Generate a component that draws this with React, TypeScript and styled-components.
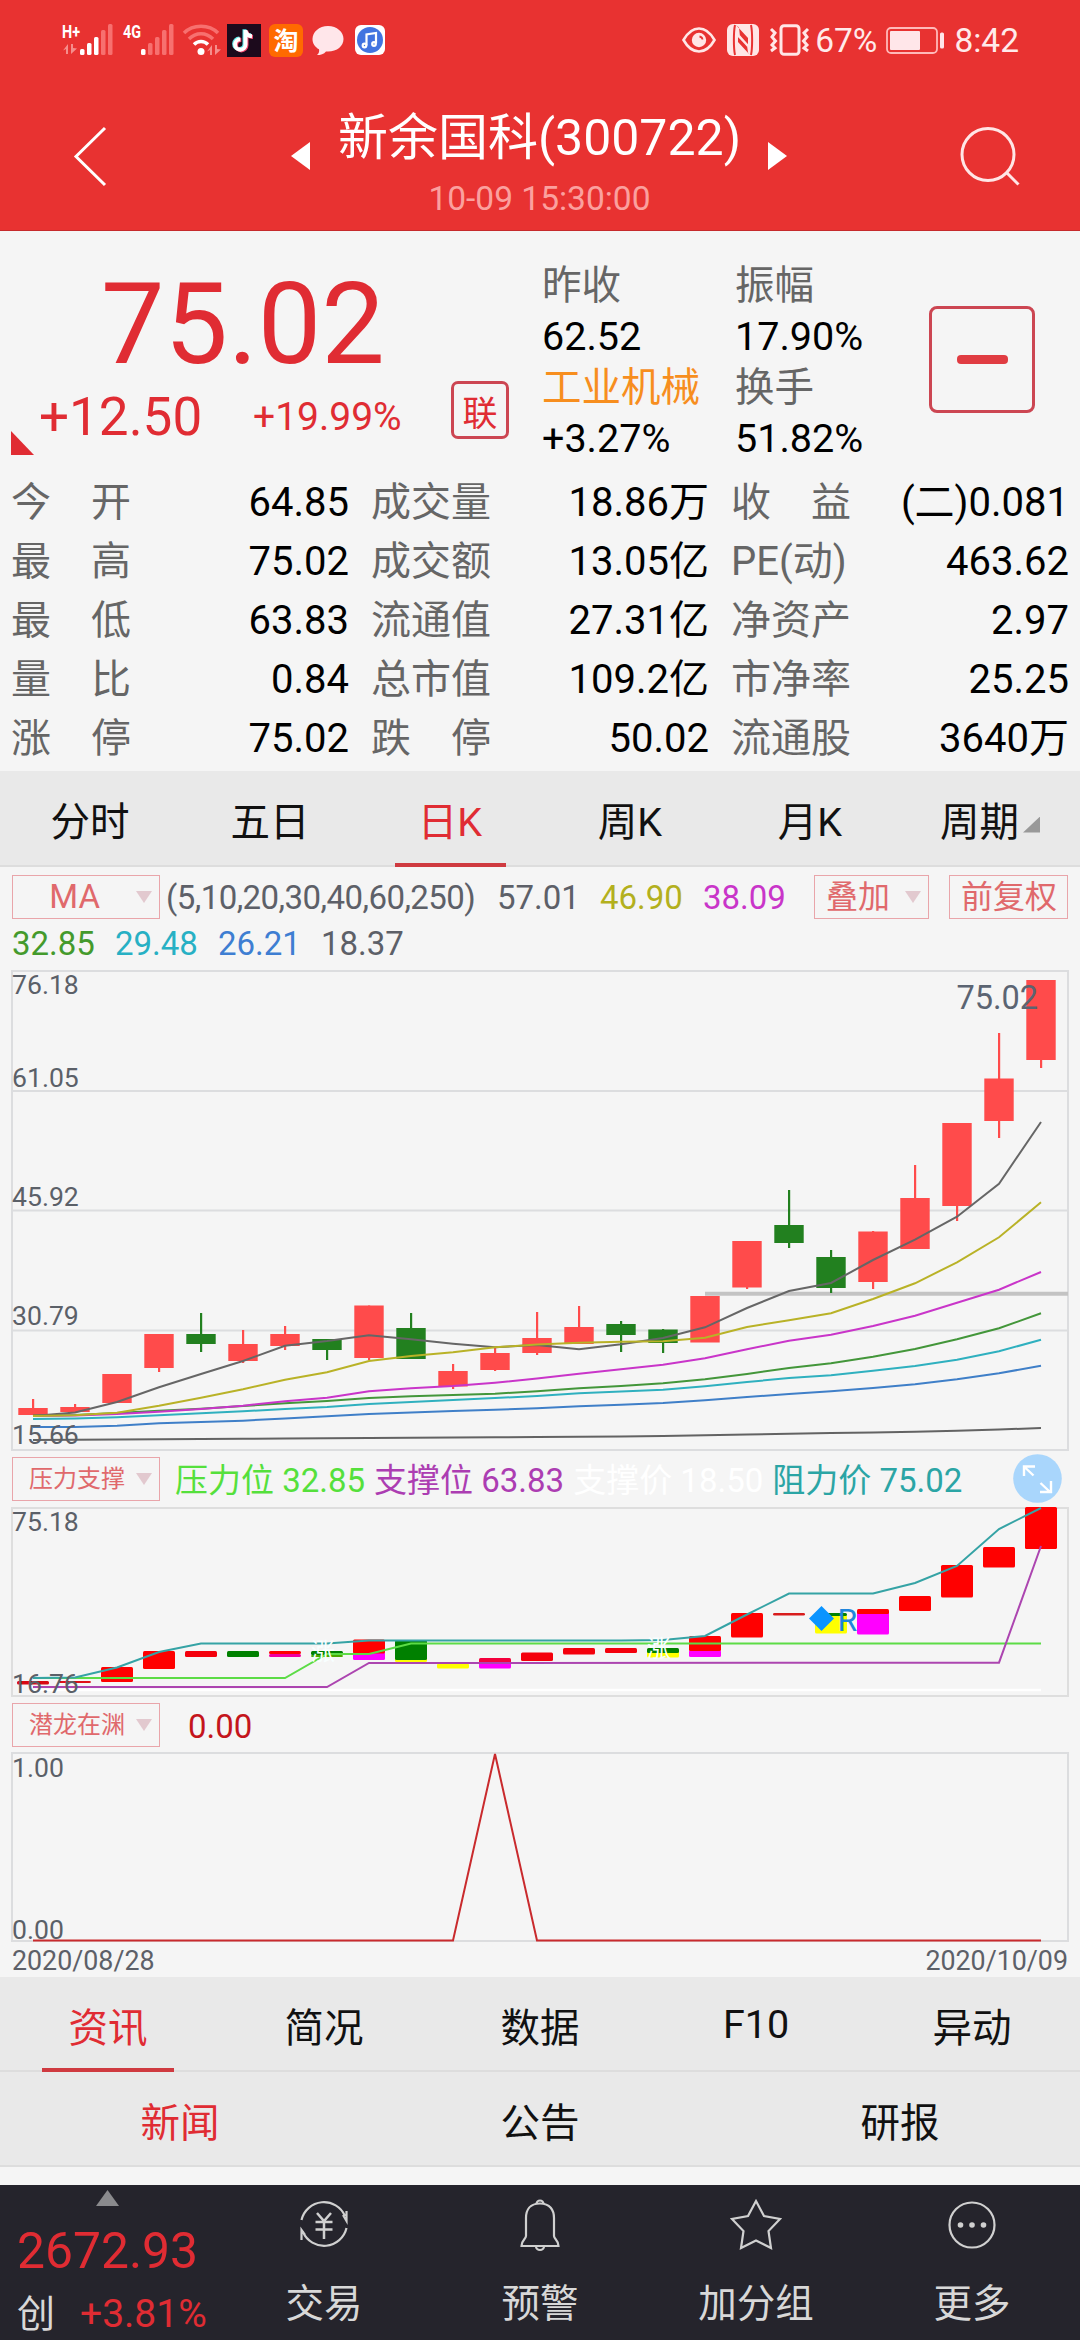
import React from "react";
import styled, { createGlobalStyle } from "styled-components";

const GlobalStyle = createGlobalStyle`
  * { box-sizing: border-box; }
  html, body { margin: 0; padding: 0; background: #f5f5f5; }
  body { font-family: Roboto, "Noto Sans CJK SC", sans-serif; color: #000; }
  svg { display: block; flex: none; overflow: visible; }
`;

const FONT = 'Roboto, "Noto Sans CJK SC", sans-serif';
const RED = "#e02c33";

const Screen = styled.div`
  width: 1080px;
  height: 2340px;
  display: flex;
  flex-direction: column;
  background: #f5f5f5;
  overflow: hidden;
  white-space: nowrap;
`;

/* ---------- header ---------- */
const Header = styled.header`
  height: 231px;
  background: #e83231;
  border-bottom: 1px solid #c62a2c;
  color: #fff;
`;
const StatusBar = styled.div`
  height: 80px;
  padding: 0 61px 0 62px;
  display: flex;
  align-items: center;
  justify-content: space-between;
`;
const StatusGroup = styled.div`
  display: flex;
  align-items: center;
`;
const StatusIcon = styled.svg<{ $gap: number }>`
  margin-right: ${(p) => p.$gap}px;
`;
const StatusText = styled.span<{ $gap?: number }>`
  font-size: 33.5px;
  line-height: 40px;
  margin: 2px ${(p) => p.$gap ?? 0}px 0 0;
  color: #ffeaea;
`;
const NavBar = styled.div`
  height: 151px;
  padding: 0 60px 0 74px;
  display: flex;
  align-items: center;
`;
const Switcher = styled.div`
  display: flex;
  align-items: center;
  gap: 27px;
  margin: 0 auto;
  padding-left: 11px;
`;
const TitleBlock = styled.div`
  display: flex;
  flex-direction: column;
  align-items: center;
  gap: 11px;
  margin-top: 16px;
`;
const Title = styled.h1`
  margin: 0;
  font-size: 50px;
  line-height: 60px;
  font-weight: 400;
`;
const Timestamp = styled.div`
  font-size: 33.5px;
  line-height: 40px;
  color: #fba09e;
`;

/* ---------- quote ---------- */
const Quote = styled.section`
  height: 540px;
`;
const Summary = styled.div`
  height: 242px;
  display: flex;
`;
const PriceBlock = styled.div`
  width: 542px;
  padding-top: 40px;
`;
const Price = styled.div`
  font-size: 113px;
  line-height: 108px;
  padding-left: 101px;
  color: ${RED};
`;
const ChangeRow = styled.div`
  height: 76px;
  padding-left: 11px;
  display: flex;
  align-items: center;
  color: ${RED};
`;
const CornerMark = styled.i`
  width: 23px;
  height: 24px;
  align-self: flex-end;
  background: ${RED};
  clip-path: polygon(0 0, 100% 100%, 0 100%);
`;
const Change = styled.span`
  width: 215px;
  padding-left: 5px;
  font-size: 53px;
`;
const ChangePercent = styled.span`
  width: 202px;
  padding-left: 4px;
  font-size: 39px;
`;
const LinkedBadge = styled.span`
  width: 58px;
  height: 58px;
  margin-top: 2px;
  align-self: flex-start;
  display: grid;
  place-items: center;
  border: 3px solid #cc4652;
  border-radius: 7px;
  font-size: 35px;
`;
const StatColumn = styled.div<{ $width: number }>`
  width: ${(p) => p.$width}px;
  padding-top: 29px;
  font-size: 39.5px;
  line-height: 51px;
`;
const Stat = styled.div<{ $color?: string }>`
  color: ${(p) => p.$color ?? "#000"};
`;
const RemoveButton = styled.button`
  width: 106px;
  height: 107px;
  margin-top: 75px;
  padding: 0;
  display: grid;
  place-items: center;
  background: none;
  border: 3px solid #cc4652;
  border-radius: 8px;
`;
const MinusBar = styled.span`
  width: 51px;
  height: 9px;
  border-radius: 4px;
  background: #e03c42;
`;
const Figures = styled.div`
  padding: 0 11px;
  display: grid;
  grid-template-columns: repeat(3, 338px);
  column-gap: 22px;
  grid-auto-rows: 59px;
`;
const Figure = styled.div`
  display: flex;
  align-items: center;
  justify-content: space-between;
  font-size: 40px;
  line-height: 59px;
`;
const FigureLabel = styled.span`
  width: 120px;
  display: flex;
  justify-content: space-between;
  color: #666;
`;

/* ---------- tabs ---------- */
const TabRow = styled.nav<{ $height: number; $cols: number }>`
  height: ${(p) => p.$height}px;
  display: grid;
  grid-template-columns: repeat(${(p) => p.$cols}, 1fr);
  background: #e9e9e9;
  border-bottom: 2px solid #dddddd;
`;
const Tab = styled.div<{ $active?: boolean; $line?: number }>`
  position: relative;
  display: flex;
  align-items: center;
  justify-content: center;
  gap: 4px;
  padding-top: 1px;
  font-size: 39.5px;
  color: ${(p) => (p.$active ? RED : "#111")};
  &::after {
    content: "";
    display: ${(p) => (p.$line ? "block" : "none")};
    position: absolute;
    bottom: -2px;
    width: ${(p) => p.$line ?? 0}px;
    height: 4px;
    background: #cf3a40;
  }
`;
const CornerArrow = styled.i`
  width: 17px;
  height: 16px;
  margin-top: 12px;
  background: #999;
  clip-path: polygon(100% 0, 100% 100%, 0 100%);
`;

/* ---------- charts ---------- */
const MaPanel = styled.div`
  height: 102px;
  padding: 8px 12px 0;
`;
const MaRow = styled.div<{ $height: number }>`
  height: ${(p) => p.$height}px;
  display: flex;
  align-items: center;
  font-size: 33px;
`;
const Picker = styled.div<{ $width: number; $size: number; $pad: number }>`
  width: ${(p) => p.$width}px;
  height: 44px;
  padding: 0 ${(p) => p.$pad}px 0 0;
  display: flex;
  align-items: center;
  justify-content: flex-end;
  gap: ${(p) => (p.$width > 130 ? 11 : 15)}px;
  border: 1.5px solid #e9a5aa;
  font-size: ${(p) => p.$size}px;
  line-height: 42px;
  color: #e0696c;
`;
const PickerLabel = styled.span<{ $shift?: number }>`
  margin-right: ${(p) => p.$shift ?? 0}px;
`;
const DownArrow = styled.i`
  width: 16px;
  height: 12px;
  background: #e2c9cf;
  clip-path: polygon(0 0, 100% 0, 50% 100%);
`;
const MaParams = styled.span`
  width: 331px;
  margin-left: 6px;
  letter-spacing: -0.55px;
  color: #5d6068;
`;
const MaValue = styled.span<{ $color: string }>`
  width: 103px;
  color: ${(p) => p.$color};
`;
const Pickers = styled.div`
  display: flex;
  gap: 20px;
  margin-left: auto;
`;
const IndicatorRow = styled.div<{ $height: number }>`
  height: ${(p) => p.$height}px;
  padding: 5px 12px 0;
  display: flex;
  align-items: flex-start;
`;
const Readings = styled.div<{ $offset: number }>`
  display: flex;
  gap: 9px;
  margin-left: ${(p) => p.$offset}px;
  font-size: 33px;
  line-height: 47px;
`;
const Reading = styled.span<{ $color: string }>`
  color: ${(p) => p.$color};
`;
const ExpandIcon = styled.svg`
  margin: -3px 6px 0 auto;
`;
const DateRow = styled.div`
  height: 34px;
  padding: 0 12px;
  display: flex;
  justify-content: space-between;
  font-size: 26.8px;
  line-height: 36px;
  color: #5d6068;
`;

/* ---------- bottom bar ---------- */
const Spacer = styled.div`
  flex: 1;
`;
const BottomBar = styled.footer`
  height: 155px;
  display: grid;
  grid-template-columns: repeat(5, 216px);
  background: #25242c;
`;
const IndexCell = styled.div`
  padding-top: 5px;
  display: flex;
  flex-direction: column;
`;
const UpArrow = styled.i`
  width: 23px;
  height: 16px;
  margin-left: 96px;
  background: #8a8a8d;
  clip-path: polygon(50% 0, 100% 100%, 0 100%);
`;
const IndexValue = styled.div`
  margin-top: 15px;
  padding-left: 17px;
  font-size: 49.8px;
  line-height: 60px;
  color: ${RED};
`;
const IndexChange = styled.div`
  display: flex;
  gap: 25px;
  padding-left: 17px;
  font-size: 39px;
  line-height: 56px;
  margin-top: 5px;
  color: ${RED};
`;
const IndexName = styled.span`
  font-size: 38px;
  color: #d8d8d8;
`;
const Action = styled.div`
  padding-top: 11px;
  display: flex;
  flex-direction: column;
  align-items: center;
  font-size: 38.5px;
  line-height: 56px;
  color: #d8d8d8;
`;
const ActionLabel = styled.span`
  margin-top: 26px;
`;

/* ---------- data ---------- */
const figures: [string, string][] = [
  ["今开", "64.85"], ["成交量", "18.86万"], ["收益", "(二)0.081"],
  ["最高", "75.02"], ["成交额", "13.05亿"], ["PE(动)", "463.62"],
  ["最低", "63.83"], ["流通值", "27.31亿"], ["净资产", "2.97"],
  ["量比", "0.84"], ["总市值", "109.2亿"], ["市净率", "25.25"],
  ["涨停", "75.02"], ["跌停", "50.02"], ["流通股", "3640万"],
];

const UP = "#ff4b4b";
const DOWN = "#22801f";
const cx = (i: number) => 33 + i * 42;

// [colour, body top, body bottom, wick top, wick bottom]
const candles: [string, number, number, number, number][] = [
  [UP, 1408, 1415, 1399, 1415], [UP, 1407, 1412, 1404, 1412], [UP, 1374, 1403, 1374, 1403],
  [UP, 1334, 1368, 1334, 1372], [DOWN, 1334, 1344, 1313, 1352], [UP, 1344, 1361, 1330, 1363],
  [UP, 1334, 1346, 1326, 1350], [DOWN, 1339, 1350, 1339, 1360], [UP, 1305.5, 1358, 1305.5, 1360],
  [DOWN, 1328, 1359, 1313, 1359], [UP, 1371, 1386.5, 1364, 1389], [UP, 1353, 1370, 1348, 1371],
  [UP, 1338, 1353, 1312, 1355], [UP, 1327, 1344, 1306, 1344], [DOWN, 1324, 1335, 1321, 1352],
  [DOWN, 1329.5, 1343, 1329, 1353], [UP, 1296, 1342.5, 1296, 1342], [UP, 1241, 1287.5, 1241, 1289],
  [DOWN, 1225, 1243, 1190, 1248], [DOWN, 1257, 1288, 1250, 1293], [UP, 1231.5, 1282, 1231, 1289],
  [UP, 1198, 1249, 1165, 1249], [UP, 1123, 1206, 1123, 1221], [UP, 1078.5, 1121, 1033, 1138],
  [UP, 980, 1060, 980, 1068],
];

const averages: { color: string; points: number[] }[] = [
  { color: "#636363", points: [1440, 1439.8, 1439.5, 1439.2, 1439, 1438.7, 1438.5, 1438.2, 1438, 1437.8, 1437.5, 1437.3, 1437, 1436.8, 1436.4, 1436, 1435.2, 1434.5, 1433.7, 1433, 1432.4, 1431.7, 1430.7, 1429.5, 1428] },
  { color: "#3f7fc8", points: [1427, 1427, 1425.7, 1423.3, 1422, 1420.7, 1418.5, 1416.3, 1414, 1412.5, 1411, 1409.7, 1408.3, 1406.3, 1404.7, 1403, 1400.3, 1397, 1394, 1391.3, 1388, 1384.3, 1379.3, 1373.3, 1365.7] },
  { color: "#2fb0bf", points: [1419, 1418.4, 1417.3, 1415.3, 1413.3, 1411.3, 1409, 1407, 1404, 1402, 1400, 1398, 1396, 1393.3, 1391.5, 1389.7, 1386.3, 1382, 1378, 1375.3, 1370.7, 1366, 1359.7, 1351.3, 1339.7] },
  { color: "#43963a", points: [1415.5, 1415, 1413, 1410.7, 1408.7, 1406, 1403.3, 1401, 1398, 1396.3, 1395, 1393.7, 1391.3, 1388.3, 1386, 1383.3, 1379.3, 1374, 1368, 1363.3, 1356.7, 1349, 1339.3, 1328.3, 1313.3] },
  { color: "#c935c9", points: [1416, 1415.5, 1414, 1411.7, 1409, 1405.7, 1401.3, 1397.7, 1391.3, 1388.3, 1386, 1382.7, 1378.5, 1373.7, 1369.3, 1364.7, 1358.3, 1349.3, 1340.7, 1334.7, 1326, 1315.7, 1302.7, 1289.7, 1272] },
  { color: "#666666", points: [1416, 1412.5, 1402, 1387.3, 1374, 1361, 1345.7, 1341, 1335.3, 1339.3, 1343.7, 1347.3, 1345, 1349.3, 1344.3, 1338, 1327.3, 1308, 1291, 1283, 1260, 1239.7, 1216.7, 1183.7, 1122] },
  { color: "#b9b227", points: [1416, 1415.3, 1412.7, 1405.7, 1397.7, 1389.3, 1379.7, 1372.3, 1361, 1356, 1352.3, 1347.3, 1344.5, 1342.7, 1341.7, 1341.3, 1337.7, 1327, 1320.3, 1313.3, 1299, 1283.3, 1262.3, 1237.3, 1202.3] },
];

const PURE_RED = "#ff0000";
const PURE_GREEN = "#008000";
const MAGENTA = "#ff00ff";
const YELLOW = "#ffff00";
// [index, colour, top, bottom]
const bars: [number, string, number, number][] = [
  [0, "#d90812", 1681, 1684.5], [1, "#e01018", 1681, 1683], [2, PURE_RED, 1667, 1682], [3, PURE_RED, 1651, 1669],
  [4, "#f4000c", 1651, 1657], [5, PURE_GREEN, 1651, 1657], [6, PURE_RED, 1651, 1654], [6, "#f000a0", 1654, 1657],
  [7, PURE_GREEN, 1651, 1655], [7, "#4aa800", 1655, 1657], [8, MAGENTA, 1652, 1660], [8, PURE_RED, 1639.5, 1653.5],
  [9, YELLOW, 1657, 1662], [9, PURE_GREEN, 1640, 1660], [10, YELLOW, 1663.5, 1668.5],
  [11, MAGENTA, 1662, 1668.5], [11, "#f4003c", 1658, 1663], [12, "#f4000c", 1652.5, 1661],
  [13, "#f4000c", 1648, 1654.5], [14, "#f4000c", 1648, 1653], [15, YELLOW, 1650, 1657.5],
  [15, PURE_GREEN, 1648, 1653], [16, MAGENTA, 1650, 1657], [16, PURE_RED, 1636, 1651],
  [17, PURE_RED, 1613, 1637.5], [18, "#d81c1c", 1613, 1615.5], [19, YELLOW, 1615, 1633.5],
  [19, PURE_GREEN, 1613, 1616], [20, MAGENTA, 1611, 1634.5], [20, PURE_RED, 1609, 1614],
  [21, PURE_RED, 1596, 1611], [22, PURE_RED, 1565, 1597.5], [23, PURE_RED, 1547, 1567.5], [24, PURE_RED, 1507, 1549],
];

const line = (pts: [number, number][]) => pts.map(([i, y]) => `${cx(i)},${y}`).join(" ");

const AxisLabel = ({ y, children, x = 12 }: { y: number; children: string; x?: number }) => (
  <text x={x} y={y} fontSize="26.6" fill="#5b6068" fontFamily={FONT}>{children}</text>
);

const CandleChart = () => (
  <svg width="1080" height="483" viewBox="0 969 1080 483">
    <g fill="none" stroke="#dcdddf" strokeWidth="2">
      <rect x="12" y="971" width="1056" height="479" />
      <path d="M12 1091H1068M12 1210.5H1068M12 1330.5H1068" />
    </g>
    <path d="M705 1293.7H1068" stroke="#c3c3c3" strokeWidth="4" />
    {candles.map(([color, top, bottom, high, low], i) => (
      <g key={i} fill={color}>
        <rect x={cx(i) - 1} y={high} width="2.2" height={low - high} />
        <rect x={cx(i) - 14.7} y={top} width="29.4" height={bottom - top} />
      </g>
    ))}
    {averages.map(({ color, points }, k) => (
      <polyline key={k} points={line(points.map((y, i) => [i, y]))} fill="none" stroke={color} strokeWidth="2" />
    ))}
    <AxisLabel y={994}>76.18</AxisLabel>
    <AxisLabel y={1086.5}>61.05</AxisLabel>
    <AxisLabel y={1206}>45.92</AxisLabel>
    <AxisLabel y={1325}>30.79</AxisLabel>
    <AxisLabel y={1444}>15.66</AxisLabel>
    <text x="956.5" y="1009" fontSize="32.5" fill="#5b6472" fontFamily={FONT}>75.02</text>
  </svg>
);

const SupportChart = () => (
  <svg width="1080" height="192" viewBox="0 1506 1080 192">
    <rect x="12" y="1508" width="1056" height="188" fill="none" stroke="#dedede" strokeWidth="2" />
    <path d="M33 1690H1041" stroke="#fff" strokeWidth="2.5" />
    {bars.map(([i, color, top, bottom], k) => (
      <rect key={k} x={cx(i) - 16} y={top} width="32" height={bottom - top} rx="1.5" fill={color} />
    ))}
    <g fill="none" strokeWidth="2">
      <polyline stroke="#5cdc46" points={line([[0, 1678], [6, 1678], [7, 1654], [8, 1654], [9, 1643.5], [24, 1643.5]])} />
      <polyline stroke="#ac45b0" points={line([[0, 1687], [7, 1687], [8, 1663], [23, 1662.7], [24, 1546]])} />
      <polyline stroke="#35a3a5" points={line([[0, 1678], [1, 1677.5], [2, 1667.5], [3, 1652], [4, 1643.5], [7, 1643.5], [8, 1640.5], [14, 1640.5], [15, 1640], [16, 1636], [17, 1614.5], [18, 1593.5], [20, 1593.5], [21, 1583], [22, 1566], [23, 1529], [24, 1508]])} />
    </g>
    <text x="311" y="1660" fontSize="24" fill="#f8ffff" fontFamily={FONT}>涨</text>
    <text x="647" y="1657" fontSize="24" fill="#f8ffff" fontFamily={FONT}>涨</text>
    <path d="M821.5 1606L834 1618.5L821.5 1631L809 1618.5Z" fill="#0a94ff" />
    <text x="837.5" y="1631" fontSize="32" fill="#2086dc" fontFamily={FONT}>R</text>
    <AxisLabel y={1531}>75.18</AxisLabel>
    <AxisLabel y={1692.5}>16.76</AxisLabel>
  </svg>
);

const SignalChart = () => (
  <svg width="1080" height="192" viewBox="0 1751 1080 192">
    <rect x="12" y="1753" width="1056" height="188" fill="none" stroke="#dcdddf" strokeWidth="2" />
    <AxisLabel y={1777}>1.00</AxisLabel>
    <AxisLabel y={1939}>0.00</AxisLabel>
    <polyline points={line([[0, 1940.5], [10, 1940.5], [11, 1754], [12, 1940.5], [24, 1940.5]])} fill="none" stroke="#c92a2d" strokeWidth="2" />
  </svg>
);

/* ---------- icons ---------- */
const Bars = ({ lit }: { lit: number }) => (
  <g>
    {[0, 1, 2, 3, 4].map((i) => (
      <rect key={i} x={18 + i * 7} y={[25, 19, 13, 6, 0][i]} width="4.5" height={[6, 12, 18, 25, 31][i]} rx="1.5"
        fill={i < lit ? "#fff" : "#f7706f"} />
    ))}
  </g>
);
const DataArrows = ({ x, y }: { x: number; y: number }) => (
  <g transform={`translate(${x} ${y})`} fill="#f58e8c">
    <path d="M5 0V10H3V5L0 6.5Z" /><path d="M8 10V0H10V4L14 4.5Z" />
  </g>
);
const Signal = ({ label, lit, gap, arrows }: { label: string; lit: number; gap: number; arrows?: boolean }) => (
  <StatusIcon $gap={gap} width="51" height="33" viewBox="0 0 51 33">
    <Bars lit={lit} />
    <text x="0" y="14" fontSize="19" fontWeight="700" fill="#fff" fontFamily={FONT} textLength="18" lengthAdjust="spacingAndGlyphs">{label}</text>
    {arrows && <DataArrows x={1} y={20} />}
  </StatusIcon>
);
const Wifi = () => (
  <StatusIcon $gap={8} width="36" height="32" viewBox="0 0 36 32">
    <g fill="none" strokeWidth="3.5">
      <path d="M1 9C10 0 26 0 35 9" stroke="#f7706f" />
      <path d="M6 15C13 8 23 8 30 15" stroke="#f7706f" />
      <path d="M11 20.5C15 16.5 21 16.5 25 20.5" stroke="#fff" />
    </g>
    <circle cx="18" cy="27.5" r="3.5" fill="#fff" />
    <DataArrows x={24} y={21} />
  </StatusIcon>
);
const NotePath = "M18.5 6V20.5a5.2 5.2 0 1 1-5.2-5.2M18.5 7c.8 3.4 3 5 6.5 5.2";
const ShortVideo = () => (
  <StatusIcon $gap={8} width="34" height="33" viewBox="0 0 34 33">
    <rect width="34" height="33" fill="#1c0a1c" />
    <g fill="none" strokeWidth="4">
      <path d={NotePath} stroke="#5de8ea" transform="translate(-1 -.7)" />
      <path d={NotePath} stroke="#f2456c" transform="translate(1 .7)" />
      <path d={NotePath} stroke="#fff" />
    </g>
  </StatusIcon>
);
const Shop = () => (
  <StatusIcon $gap={9} width="34" height="33" viewBox="0 0 34 33">
    <rect width="34" height="33" rx="6" fill="#ff6a00" />
    <text x="4.5" y="26" fontSize="25" fontWeight="700" fill="#fff" fontFamily={FONT}>淘</text>
  </StatusIcon>
);
const Bubble = () => (
  <StatusIcon $gap={11} width="32" height="31" viewBox="0 0 32 31">
    <path d="M16 1C25 1 31.5 7 31.5 14S25 26.5 16 26.5L14 26.4C12 29 8.5 30 5 30 7 28.5 7.5 26.5 7 24.3 3 22 .5 18.5 .5 14 .5 7 7 1 16 1Z" fill="#ffe6ea" />
  </StatusIcon>
);
const Music = () => (
  <StatusIcon $gap={0} width="30" height="30" viewBox="0 0 30 30">
    <rect width="30" height="30" rx="6" fill="#fff" />
    <circle cx="15" cy="15" r="13" fill="#4274e0" />
    <g fill="none" stroke="#fff" strokeWidth="2.2">
      <path d="M11.5 20.5V9.5L21 8V18.5" />
      <circle cx="9.5" cy="20.5" r="1.8" /><circle cx="19" cy="19" r="1.8" />
    </g>
  </StatusIcon>
);
const Eye = () => (
  <StatusIcon $gap={11} width="34" height="26" viewBox="0 0 34 26">
    <path d="M1.5 13C6 5 11 1.5 17 1.5S28 5 32.5 13C28 21 23 24.5 17 24.5S6 21 1.5 13Z" fill="none" stroke="#ffe6e6" strokeWidth="2.6" />
    <circle cx="17" cy="13" r="7.2" fill="#ffe6e6" />
    <path d="M17.5 9.5A3.5 3.5 0 0 1 20.5 12.5" fill="none" stroke="#e83231" strokeWidth="1.8" />
  </StatusIcon>
);
const Nfc = () => (
  <StatusIcon $gap={11} width="32" height="32" viewBox="0 0 32 32">
    <rect width="32" height="32" rx="6" fill="#ffe6e6" />
    <g fill="none" stroke="#e83231" strokeWidth="2">
      <path d="M8 1C6.5 8 6.500 24 8 31" />
      <path d="M24 31C25.500 24 25.500 8 24 1" />
    </g>
    <path d="M9 1L21 14V21L13 12.500 12 3.500Z" fill="#e83231" />
    <path d="M23 31L11 18V13L20 21.500 21 28.500Z" fill="#e83231" />
    <path d="M12 12L21 22" stroke="#ffe6e6" strokeWidth="2.500" />
  </StatusIcon>
);
const Vibrate = () => (
  <StatusIcon $gap={6} width="39" height="32" viewBox="0 0 39 32">
    <g fill="none" stroke="#ffe6e6" strokeWidth="3">
      <rect x="11" y="1.8" width="18" height="28.4" rx="3" />
      <path d="M1 5L5 9 2 13 5.5 17 2 21 5 24 1 27" />
      <path d="M38 5L34 9 37 13 33.5 17 37 21 34 24 38 27" />
    </g>
  </StatusIcon>
);
const Battery = () => (
  <StatusIcon $gap={10} width="58" height="27" viewBox="0 0 58 27">
    <rect x="1" y="1" width="50" height="25" rx="4" fill="none" stroke="#ffb9b9" strokeWidth="1.8" />
    <rect x="4" y="4" width="30" height="19" rx="1" fill="#ffe6e9" />
    <rect x="54" y="5.5" width="4" height="16" rx="1.5" fill="#ffe6e9" />
  </StatusIcon>
);
const ActionIcon = ({ children }: { children: React.ReactNode }) => (
  <svg width="54" height="54" viewBox="0 0 54 54" fill="none" stroke="#d0d0d0" strokeWidth="2.2">{children}</svg>
);

const actions: [string, React.ReactNode][] = [
  ["交易", <>
    <path d="M4.5 24A23 23 0 0 1 48 20M49.5 15V25L46 19" />
    <path d="M49.5 32A23 23 0 0 1 6 36M4.5 44V34L8 39" />
    <path d="M20 17L27 25 34 17M27 25V43M18.5 26H35.5M18.5 33.5H35.5" strokeWidth="2.5" />
  </>],
  ["预警", <>
    <path d="M27 7.5C17 7.5 13 14 13 22V40C13 43 8.5 44 8.5 50H45.5C45.5 44 41 43 41 40V22C41 14 37 7.5 27 7.5Z" />
    <path d="M23.5 8A3.5 3.5 0 0 1 30.5 8M23 50.5A4 3.5 0 0 0 31 50.5" />
  </>],
  ["加分组", <path d="M27 5L35 20 51 23 39.5 35 42 52 27 44.5 12 52 14.5 35 3 23 19 20Z" />],
  ["更多", <>
    <circle cx="27" cy="29" r="22.5" />
    <g fill="#d0d0d0" stroke="none"><circle cx="15.5" cy="29" r="2.8" /><circle cx="27" cy="29" r="2.8" /><circle cx="38.5" cy="29" r="2.8" /></g>
  </>],
];

export default function App() {
  return (
    <Screen>
      <GlobalStyle />
      <Header>
        <StatusBar>
          <StatusGroup>
            <Signal label="H+" lit={3} gap={10} arrows />
            <Signal label="4G" lit={1} gap={9} />
            <Wifi />
            <ShortVideo />
            <Shop />
            <Bubble />
            <Music />
          </StatusGroup>
          <StatusGroup>
            <Eye />
            <Nfc />
            <Vibrate />
            <StatusText $gap={9}>67%</StatusText>
            <Battery />
            <StatusText>8:42</StatusText>
          </StatusGroup>
        </StatusBar>
        <NavBar>
          <svg width="34" height="60" viewBox="0 0 34 60" fill="none" stroke="#fff" strokeWidth="3"><path d="M31 2L2 30.5 31 59" /></svg>
          <Switcher>
            <svg width="20" height="28" viewBox="0 0 20 28"><path d="M19 0V28L0 14Z" fill="#fff" /></svg>
            <TitleBlock>
              <Title>新余国科(300722)</Title>
              <Timestamp>10-09 15:30:00</Timestamp>
            </TitleBlock>
            <svg width="20" height="28" viewBox="0 0 20 28"><path d="M0 0V28L19 14Z" fill="#fff" /></svg>
          </Switcher>
          <svg width="60" height="60" viewBox="0 0 60 60" fill="none" stroke="#ffe6e6" strokeWidth="3">
            <circle cx="28" cy="28.5" r="26" /><path d="M46 46L58.5 58.5" />
          </svg>
        </NavBar>
      </Header>

      <Quote>
        <Summary>
          <PriceBlock>
            <Price>75.02</Price>
            <ChangeRow>
              <CornerMark />
              <Change>+12.50</Change>
              <ChangePercent>+19.99%</ChangePercent>
              <LinkedBadge>联</LinkedBadge>
            </ChangeRow>
          </PriceBlock>
          <StatColumn $width={193}>
            <Stat $color="#666">昨收</Stat>
            <Stat>62.52</Stat>
            <Stat $color="#f78e1e">工业机械</Stat>
            <Stat>+3.27%</Stat>
          </StatColumn>
          <StatColumn $width={194}>
            <Stat $color="#666">振幅</Stat>
            <Stat>17.90%</Stat>
            <Stat $color="#666">换手</Stat>
            <Stat>51.82%</Stat>
          </StatColumn>
          <RemoveButton><MinusBar /></RemoveButton>
        </Summary>
        <Figures>
          {figures.map(([label, value]) => (
            <Figure key={label}>
              <FigureLabel>
                {label.length === 2 ? label.split("").map((c) => <span key={c}>{c}</span>) : label}
              </FigureLabel>
              <span>{value}</span>
            </Figure>
          ))}
        </Figures>
      </Quote>

      <TabRow $height={96} $cols={6}>
        <Tab>分时</Tab>
        <Tab>五日</Tab>
        <Tab $active $line={111}>日K</Tab>
        <Tab>周K</Tab>
        <Tab>月K</Tab>
        <Tab>周期<CornerArrow /></Tab>
      </TabRow>

      <MaPanel>
        <MaRow $height={44}>
          <Picker $width={148} $size={33} $pad={7}><PickerLabel $shift={25}>MA</PickerLabel><DownArrow /></Picker>
          <MaParams>(5,10,20,30,40,60,250)</MaParams>
          <MaValue $color="#5d6068">57.01</MaValue>
          <MaValue $color="#b3b01e">46.90</MaValue>
          <MaValue $color="#c935c9">38.09</MaValue>
          <Pickers>
            <Picker $width={115} $size={32} $pad={7}>叠加<DownArrow /></Picker>
            <Picker $width={119} $size={32} $pad={10}>前复权</Picker>
          </Pickers>
        </MaRow>
        <MaRow $height={49}>
          <MaValue $color="#449a2c">32.85</MaValue>
          <MaValue $color="#27b0c4">29.48</MaValue>
          <MaValue $color="#3e7ed2">26.21</MaValue>
          <MaValue $color="#5d6068">18.37</MaValue>
        </MaRow>
      </MaPanel>

      <CandleChart />
      <IndicatorRow $height={54}>
        <Picker $width={148} $size={24} $pad={7}>压力支撑<DownArrow /></Picker>
        <Readings $offset={15}>
          <Reading $color="#55e03c">压力位 32.85</Reading>
          <Reading $color="#ac3db2">支撑位 63.83</Reading>
          <Reading $color="#ffffff">支撑价 18.50</Reading>
          <Reading $color="#2ba5a5">阻力价 75.02</Reading>
        </Readings>
        <ExpandIcon width="49" height="49" viewBox="0 0 49 49">
          <circle cx="24.5" cy="24.5" r="24.3" fill="#a9d6fc" />
          <path d="M11 22V12.5H22M11.5 13L20.5 21.500M27.500 29L36.5 37.5M38 27V38H27" fill="none" stroke="#fff" strokeWidth="2.4" />
        </ExpandIcon>
      </IndicatorRow>
      <SupportChart />
      <IndicatorRow $height={53}>
        <Picker $width={148} $size={24} $pad={7}>潜龙在渊<DownArrow /></Picker>
        <Readings $offset={28}><Reading $color="#c4151c">0.00</Reading></Readings>
      </IndicatorRow>
      <SignalChart />
      <DateRow><span>2020/08/28</span><span>2020/10/09</span></DateRow>

      <TabRow $height={95} $cols={5}>
        <Tab $active $line={132}>资讯</Tab>
        <Tab>简况</Tab>
        <Tab>数据</Tab>
        <Tab>F10</Tab>
        <Tab>异动</Tab>
      </TabRow>
      <TabRow $height={95} $cols={3}>
        <Tab $active>新闻</Tab>
        <Tab>公告</Tab>
        <Tab>研报</Tab>
      </TabRow>
      <Spacer />

      <BottomBar>
        <IndexCell>
          <UpArrow />
          <IndexValue>2672.93</IndexValue>
          <IndexChange><IndexName>创</IndexName>+3.81%</IndexChange>
        </IndexCell>
        {actions.map(([label, icon]) => (
          <Action key={label}>
            <ActionIcon>{icon}</ActionIcon>
            <ActionLabel>{label}</ActionLabel>
          </Action>
        ))}
      </BottomBar>
    </Screen>
  );
}
